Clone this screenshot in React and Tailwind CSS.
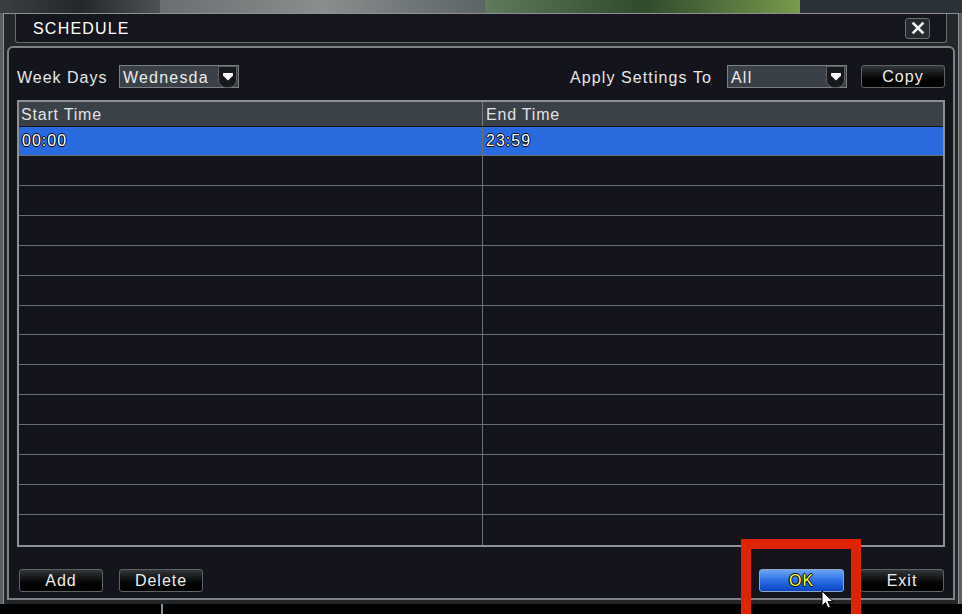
import React from "react";

const font = "font-['Liberation_Sans',Arial,sans-serif]";

function Arrow() {
  return (
    <div className="ml-auto mr-[1px] flex h-[22px] w-[19px] items-start justify-center rounded-b-[8px] border border-[#5c6064] bg-[#16181b] pt-[5px]">
      <svg width="12" height="10" viewBox="0 0 12 10">
        <path d="M1 1.5 Q1 1 1.5 1 H10.5 Q11 1 11 1.5 V3.5 L6 8.5 L1 3.5 Z" fill="#ffffff" />
      </svg>
    </div>
  );
}

function Select({ value }) {
  return (
    <div className="flex h-[23px] w-[120px] items-center border border-[#7b7f83] bg-[#394047]">
      <span className="pl-[3px] pt-[2px] text-[16px] tracking-[1.2px] text-[#ececec]">{value}</span>
      <Arrow />
    </div>
  );
}

function DarkButton({ label, className = "" }) {
  return (
    <div
      className={`flex h-[23px] w-[84px] items-center justify-center rounded-[3px] border border-[#5e6265] bg-linear-to-b from-[#34383b] via-[#0b0c0d] to-[#000000] pt-[1px] text-[16px] tracking-[1px] text-[#ececec] ${className}`}
    >
      {label}
    </div>
  );
}

const outline =
  "[text-shadow:1px_0_#000,-1px_0_#000,0_1px_#000,0_-1px_#000]";

export default function App() {
  const rows = Array.from({ length: 14 });
  return (
    <div className={`relative flex h-[614px] w-[962px] flex-col overflow-hidden bg-black ${font}`}>
      {/* video strip */}
      <div className="flex h-[13px]">
        <div className="w-[160px] bg-linear-to-r from-[#3a3f42] via-[#24282a] to-[#4d5254]" />
        <div className="w-[325px] bg-linear-to-r from-[#6a6e70] via-[#8a8e8e] to-[#5c6466]" />
        <div className="w-[315px] bg-linear-to-r from-[#5f7a5c] via-[#2f4a2c] to-[#7a9a4c]" />
        <div className="flex-1 bg-[#2a3137]" />
      </div>

      {/* frame */}
      <div className="flex h-[591px] bg-[#5a5f63] px-[3px]">
        <div className="flex flex-1 flex-col border-x border-t border-[#8e9194] bg-[#24272a] px-[3px] pb-[4px]">
          {/* title bar */}
          <div className="mx-[8px] flex h-[29px] items-center rounded-b-[3px] border-x border-b border-[#6a6d70] bg-[#15161d] pl-[17px] pr-[16px]">
            <span className="pt-[1px] text-[16px] tracking-[1.2px] text-white">SCHEDULE</span>
            <div className="ml-auto flex h-[21px] w-[25px] items-center justify-center rounded-[3px] border border-[#6b6e72] bg-[#26292d]">
              <svg width="14" height="14" viewBox="0 0 14 14">
                <path d="M2.5 2.5 L11.5 11.5 M11.5 2.5 L2.5 11.5" stroke="#f0f0f0" strokeWidth="2.6" strokeLinecap="square" />
              </svg>
            </div>
          </div>

          {/* main panel */}
          <div className="mt-[3px] flex flex-1 flex-col rounded-t-[6px] border-2 border-[#7e8285] bg-[#14151c] px-[8px] pt-[17px]">
            {/* controls */}
            <div className="flex h-[23px] items-center">
              <span className="w-[102px] pt-[2px] text-[16px] tracking-[1px] text-[#e6e6e6]">Week Days</span>
              <Select value="Wednesda" />
              <span className="ml-auto mr-[15px] pt-[2px] text-[16px] tracking-[1.1px] text-[#e6e6e6]">
                Apply Settings To
              </span>
              <Select value="All" />
              <DarkButton label="Copy" className="ml-[14px]" />
            </div>

            {/* table */}
            <div className="mt-[12px] flex h-[447px] flex-col border-2 border-[#8e9194]">
              <div className="flex h-[25px] border-b border-[#101114] bg-[#3a4148] text-[16px] tracking-[0.8px] text-[#e2e2e2]">
                <div className="flex w-[464px] items-center border-r border-[#7a7e82] pl-[2px] pt-[1px]">Start Time</div>
                <div className="flex flex-1 items-center pl-[3px] pt-[1px]">End Time</div>
              </div>
              {rows.map((_, i) => (
                <div
                  key={i}
                  className={`flex ${i === 0 ? "h-[29px]" : "h-[30px]"} ${
                    i < 13 ? "border-b border-[#6c6f72]" : ""
                  } ${i === 0 ? "bg-[#2a6adf]" : ""}`}
                >
                  <div className={`flex w-[464px] items-center border-r border-[#6c6f72] pl-[3px] text-[16px] tracking-[1px] text-white ${outline}`}>
                    {i === 0 ? "00:00" : ""}
                  </div>
                  <div className={`flex flex-1 items-center pl-[3px] text-[16px] tracking-[1px] text-white ${outline}`}>
                    {i === 0 ? "23:59" : ""}
                  </div>
                </div>
              ))}
            </div>

            {/* bottom buttons */}
            <div className="mt-[22px] flex h-[23px] items-center">
              <DarkButton label="Add" className="ml-[2px]" />
              <DarkButton label="Delete" className="ml-[16px]" />
              <div
                className={`ml-auto flex h-[23px] w-[85px] items-center justify-center rounded-[3px] border border-[#8fa6c8] bg-linear-to-b from-[#6aa4f6] via-[#2a6ee6] to-[#0a44c4] pt-[1px] text-[16px] tracking-[1px] text-[#ffff33] ${outline}`}
              >
                OK
              </div>
              <DarkButton label="Exit" className="ml-[16px] mr-[1px]" />
            </div>
          </div>
        </div>
      </div>

      {/* bottom black area */}
      <div className="flex h-[10px]">
        <div className="ml-[161px] h-full w-[2px] bg-[#8a8d90]" />
      </div>

      {/* red highlight */}
      <div className="absolute left-[741px] top-[539px] h-[90px] w-[120px] border-[10px] border-[#e02400]" />

      {/* cursor */}
      <svg className="absolute left-[821px] top-[590px]" width="14" height="20" viewBox="0 0 14 20">
        <path d="M1 1 L1 16 L4.5 12.5 L7 18 L9.5 17 L7 11.5 L12 11.5 Z" fill="#ffffff" stroke="#000000" strokeWidth="1" />
      </svg>
    </div>
  );
}
